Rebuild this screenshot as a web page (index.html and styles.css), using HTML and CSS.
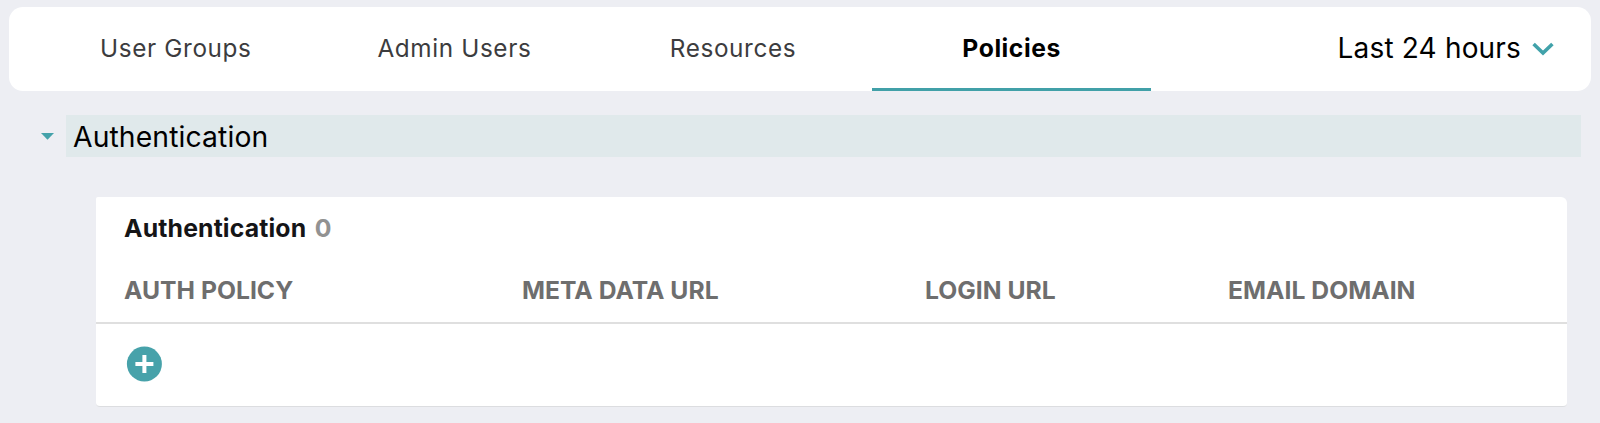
FILE: index.html
```html
<!DOCTYPE html>
<html lang="en">
<head>
<meta charset="utf-8">
<title>Policies</title>
<link rel="stylesheet" href="styles.css">
</head>
<body>
<header class="topbar">
  <nav class="tabs">
    <a class="tab">User Groups</a>
    <a class="tab">Admin Users</a>
    <a class="tab">Resources</a>
    <a class="tab active">Policies</a>
  </nav>
  <div class="range"><span>Last 24 hours</span>
    <svg class="chevron" width="22" height="14" viewBox="0 0 22 14"><path d="M1.6 2 L11 11 L20.4 2" fill="none" stroke="#41a2aa" stroke-width="3.6"/></svg>
  </div>
</header>
<main>
  <section class="section">
    <svg class="caret" width="13" height="7" viewBox="0 0 13 7"><path d="M0 0H13L6.5 6.7Z" fill="#44a2aa"/></svg>
    <h2 class="section-title">Authentication</h2>
  </section>
  <section class="card">
    <h3 class="card-title">Authentication <span class="count">0</span></h3>
    <div class="columns">
      <span>AUTH POLICY</span><span>META DATA URL</span><span>LOGIN URL</span><span>EMAIL DOMAIN</span>
    </div>
    <div class="add-row">
      <svg width="36" height="36" viewBox="0 0 36 36"><circle cx="18.4" cy="18" r="17.5" fill="#47a2aa"/><path d="M18.4 9V27M9.4 18H27.4" stroke="#fff" stroke-width="4"/></svg>
    </div>
  </section>
</main>
</body>
</html>
```

FILE: styles.css
```css
* { box-sizing: border-box; }
body {
  margin: 0;
  padding: 7px 9px 0;
  height: 423px;
  overflow: hidden;
  background: #edeef3;
  font-family: Inter, "Liberation Sans", sans-serif;
  color: #000;
}
.topbar {
  display: flex;
  justify-content: space-between;
  height: 83.5px;
  padding: 0 37px 0 27.5px;
  background: #fff;
  border-radius: 14px;
}
.tabs { display: flex; }
.tab {
  width: 278.6px;
  padding-top: 27px;
  border-bottom: 3.5px solid transparent;
  font-size: 24.3px;
  line-height: 29px;
  letter-spacing: 0.63px;
  text-align: center;
  color: #3c3c3e;
}
.tab.active { border-color: #41a0a8; font-size: 24.7px; font-weight: 700; letter-spacing: 0.55px; color: #000; }
.range {
  display: flex;
  align-items: flex-start;
  gap: 11px;
  padding-top: 24px;
  font-size: 28px;
  line-height: 34px;
  letter-spacing: 0.17px;
}
.chevron { margin-top: 11px; }
.section {
  display: flex;
  align-items: center;
  gap: 12.5px;
  margin-top: 24.5px;
  padding: 0 10px 0 31.5px;
}
.section-title {
  flex: 1;
  height: 42px;
  margin: 0;
  padding-left: 7px;
  background: #e0e9eb;
  font-size: 28.3px;
  font-weight: 400;
  line-height: 45px;
  letter-spacing: 0.12px;
}
.card {
  width: 1471px;
  height: 210px;
  margin: 40px 0 0 87px;
  background: #fff;
  border-bottom: 1px solid #dcdde0;
  border-radius: 2px 6px 4px 4px;
}
.card-title {
  margin: 0;
  padding: 16px 28px 0;
  font-size: 24.8px;
  font-weight: 700;
  line-height: 31px;
  letter-spacing: 0.15px;
  color: #151517;
}
.count { margin-left: 2.5px; color: #929292; }
.columns {
  display: grid;
  grid-template-columns: 398px 403px 303px 1fr;
  height: 80px;
  padding: 31px 0 0 28px;
  border-bottom: 2px solid #dfdfdf;
  font-size: 24.7px;
  font-weight: 700;
  line-height: 31px;
  letter-spacing: 0.02px;
  color: #6e6e6e;
}
.add-row { padding: 22px 30px 0; }
.add-row svg { display: block; }
```
